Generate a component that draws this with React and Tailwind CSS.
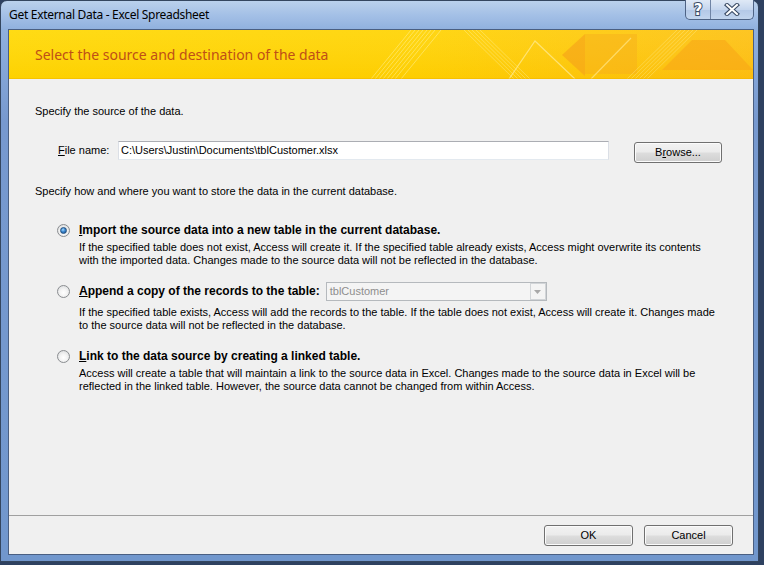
import React from "react";

function Radio({ checked }) {
  return (
    <div className="w-[13px] h-[13px] rounded-full border border-[#8a8d90] bg-[radial-gradient(circle_at_50%_60%,#ffffff_0%,#f4f4f4_40%,#d4d6d8_100%)] flex items-center justify-center shrink-0">
      {checked && (
        <div className="w-[7px] h-[7px] rounded-full bg-[radial-gradient(circle_at_40%_35%,#a6dcff_0%,#3a86cf_45%,#1b4f8c_100%)] border border-[#24507e]" />
      )}
    </div>
  );
}

function WinButton({ children, className = "" }) {
  return (
    <div
      className={
        "h-[21px] rounded-[3px] border border-[#707070] bg-[linear-gradient(to_bottom,#f2f2f2_0%,#ebebeb_48%,#dddddd_52%,#cfcfcf_100%)] shadow-[inset_0_0_0_1px_#fbfbfb] flex items-center justify-center text-[11px] text-black " +
        className
      }
    >
      {children}
    </div>
  );
}

function BannerArt() {
  return (
    <svg
      className="absolute inset-0"
      width="744"
      height="49"
      viewBox="0 0 744 49"
    >
      <defs>
        <linearGradient id="bg" x1="0" y1="0" x2="1" y2="0">
          <stop offset="0" stopColor="#ffd800" />
          <stop offset="0.55" stopColor="#ffd300" />
          <stop offset="1" stopColor="#fdc010" />
        </linearGradient>
        <linearGradient id="bgv" x1="0" y1="0" x2="0" y2="1">
          <stop offset="0" stopColor="#ffffff" stopOpacity="0.08" />
          <stop offset="1" stopColor="#f0a000" stopOpacity="0.12" />
        </linearGradient>
      </defs>
      <rect width="744" height="49" fill="url(#bg)" />
      <rect width="744" height="49" fill="url(#bgv)" />
      {[0, 4, 8, 12, 16, 20, 24].map((d) => (
        <line
          key={"a" + d}
          x1={362 + d}
          y1="49"
          x2={402 + d}
          y2="0"
          stroke="#fff3a0"
          strokeOpacity="0.5"
          strokeWidth="1"
        />
      ))}
      <line x1="392" y1="49" x2="432" y2="0" stroke="#fff3a0" strokeOpacity="0.5" strokeWidth="1" />
      {[0, 4, 8, 12, 16].map((d) => (
        <line
          key={"b" + d}
          x1={455 + d}
          y1="0"
          x2={505 + d}
          y2="49"
          stroke="#fff3a0"
          strokeOpacity="0.4"
          strokeWidth="1"
        />
      ))}
      <polyline
        points="500,49 526,11 566,49"
        fill="none"
        stroke="#ffe98a"
        strokeOpacity="0.8"
        strokeWidth="1.2"
      />
      <polygon points="553,25 576,4 576,46" fill="#f6a31a" fillOpacity="0.65" />
      <rect x="576" y="4" width="52" height="40" fill="#f7ad1c" fillOpacity="0.45" />
      <line x1="582" y1="49" x2="622" y2="8" stroke="#ffe27a" strokeOpacity="0.8" strokeWidth="1.2" />
      {[0, 4, 8, 12, 16, 20].map((d) => (
        <line
          key={"c" + d}
          x1={618 + d}
          y1="49"
          x2={668 + d}
          y2="0"
          stroke="#fff3a0"
          strokeOpacity="0.35"
          strokeWidth="1"
        />
      ))}
      <polygon points="683,10 716,10 744,40 653,40" fill="#f8a618" fillOpacity="0.6" />
      <rect x="0" y="48" width="744" height="1" fill="#f0b400" fillOpacity="0.5" />
    </svg>
  );
}

export default function App() {
  return (
    <div className="w-[764px] h-[565px] bg-[#2e4160] overflow-hidden font-['Liberation_Sans',Arial,sans-serif]">
      <div className="w-[759px] h-[562px] rounded-t-[7px] border border-[#34465f] bg-[linear-gradient(to_bottom,#bad1ec_0px,#a4c0e6_14px,#8fb0de_29px,#7799cf_120px,#7197cd_100%)] flex flex-col pl-[7px] pr-[4px] pb-[6px]">
        {/* Title bar */}
        <div className="h-[28px] flex items-start justify-between shrink-0">
          <div className="mt-[6px] ml-[1px] text-[12px] leading-[16px] text-black font-['Noto_Sans',sans-serif] tracking-[-0.3px]">
            Get External Data - Excel Spreadsheet
          </div>
          <div className="mt-[-1px] h-[20px] flex rounded-b-[5px] border border-t-0 border-[#4e6385] bg-[linear-gradient(to_bottom,#dfe9f6_0%,#c5d6ee_50%,#b3c8e7_51%,#c2d5ee_100%)] overflow-hidden">
            <div className="w-[25px] h-full flex items-center justify-center border-r border-[#6f84a5]">
              <svg width="14" height="16" viewBox="0 0 14 16">
                <text
                  x="7"
                  y="13"
                  textAnchor="middle"
                  fontSize="15"
                  fontWeight="bold"
                  fontFamily="DejaVu Sans, sans-serif"
                  fill="#ffffff"
                  stroke="#3b4c66"
                  strokeWidth="2"
                  paintOrder="stroke"
                >
                  ?
                </text>
              </svg>
            </div>
            <div className="w-[42px] h-full flex items-center justify-center">
              <svg width="16" height="13" viewBox="0 0 16 13">
                <path d="M3 2 L13 11 M13 2 L3 11" stroke="#3b4c66" strokeWidth="4.2" strokeLinecap="square" />
                <path d="M3 2 L13 11 M13 2 L3 11" stroke="#ffffff" strokeWidth="2" strokeLinecap="square" />
              </svg>
            </div>
          </div>
        </div>

        {/* Client area */}
        <div className="flex-1 flex flex-col border border-[#4a5f82] bg-[#f0f0f0] text-[11px] leading-[13px] text-black">
          {/* Banner */}
          <div className="relative h-[49px] shrink-0 overflow-hidden">
            <BannerArt />
            <div className="relative pl-[26px] leading-[49px] text-[14px] text-[#bf4f17] font-['Noto_Sans',sans-serif]">
              Select the source and destination of the data
            </div>
          </div>

          <div className="flex flex-col pl-[26px]">
            <div className="mt-[26px] whitespace-nowrap">Specify the source of the data.</div>

            <div className="mt-[23px] flex items-start h-[22px]">
              <div className="ml-[23px] w-[60px] leading-[19px] whitespace-nowrap">
                <span className="underline">F</span>ile name:
              </div>
              <div className="w-[491px] h-[19px] border border-[#abadb3] border-l-[#dbdfe6] border-r-[#dbdfe6] border-b-[#e3e9ef] bg-white leading-[17px] pl-[2px] whitespace-nowrap">
                C:\Users\Justin\Documents\tblCustomer.xlsx
              </div>
              <WinButton className="ml-[25px] mt-[1px] w-[88px]">
                <span>
                  B<span className="underline">r</span>owse...
                </span>
              </WinButton>
            </div>

            <div className="mt-[22px] whitespace-nowrap">
              Specify how and where you want to store the data in the current database.
            </div>

            {/* Option 1 */}
            <div className="mt-[25px] flex items-center ml-[22px] h-[14px]">
              <Radio checked />
              <div className="ml-[9px] text-[12px] leading-[14px] font-bold whitespace-nowrap">
                <span className="underline">I</span>mport the source data into a new table in the current database.
              </div>
            </div>
            <div className="mt-[4px] ml-[44px] whitespace-nowrap">
              <div>
                If the specified table does not exist, Access will create it. If the specified table already exists, Access might overwrite its contents
              </div>
              <div>
                with the imported data. Changes made to the source data will not be reflected in the database.
              </div>
            </div>

            {/* Option 2 */}
            <div className="mt-[15px] flex items-center ml-[22px] h-[19px]">
              <Radio />
              <div className="ml-[9px] text-[12px] font-bold whitespace-nowrap">
                <span className="underline">A</span>ppend a copy of the records to the table:
              </div>
              <div className="ml-[6px] w-[221px] h-[19px] border border-[#b5b9bd] bg-[#f4f4f4] flex items-center justify-between">
                <span className="pl-[3px] text-[#8e8e8e]">tblCustomer</span>
                <div className="w-[16px] h-[17px] border border-[#d2d5d8] bg-[#f4f4f4] flex items-center justify-center">
                  <svg width="7" height="4" viewBox="0 0 7 4">
                    <path d="M0 0 L7 0 L3.5 4 Z" fill="#a8a8a8" />
                  </svg>
                </div>
              </div>
            </div>
            <div className="mt-[5px] ml-[44px] whitespace-nowrap">
              <div>
                If the specified table exists, Access will add the records to the table. If the table does not exist, Access will create it. Changes made
              </div>
              <div>to the source data will not be reflected in the database.</div>
            </div>

            {/* Option 3 */}
            <div className="mt-[17px] flex items-center ml-[22px] h-[14px]">
              <Radio />
              <div className="ml-[9px] text-[12px] leading-[14px] font-bold whitespace-nowrap">
                <span className="underline">L</span>ink to the data source by creating a linked table.
              </div>
            </div>
            <div className="mt-[4px] ml-[44px] whitespace-nowrap">
              <div>
                Access will create a table that will maintain a link to the source data in Excel. Changes made to the source data in Excel will be
              </div>
              <div>reflected in the linked table. However, the source data cannot be changed from within Access.</div>
            </div>
          </div>

          <div className="flex-1" />

          {/* Footer */}
          <div className="shrink-0 border-t border-[#a0a0a0] h-[39px] flex justify-end items-start pt-[9px] pr-[20px] gap-[11px]">
            <WinButton className="w-[89px]">OK</WinButton>
            <WinButton className="w-[89px]">Cancel</WinButton>
          </div>
        </div>
      </div>
    </div>
  );
}
